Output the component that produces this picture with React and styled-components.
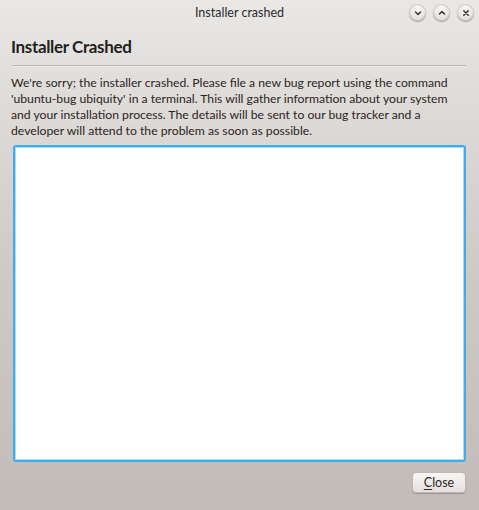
import styled, { createGlobalStyle } from "styled-components";

const GlobalStyle = createGlobalStyle`
  html, body {
    margin: 0;
    padding: 0;
  }
  body {
    font-family: Lato, "Open Sans", "DejaVu Sans", sans-serif;
  }
`;

const Window = styled.div`
  width: 479px;
  height: 510px;
  display: flex;
  flex-direction: column;
  box-sizing: border-box;
  background: linear-gradient(to bottom, #e9e8e6 0%, #dedbd9 20%, #cfc9c6 55%, #c3bbb7 100%);
  overflow: hidden;
`;

const TitleBar = styled.div`
  height: 24px;
  position: relative;
  display: flex;
  align-items: center;
  justify-content: center;
  font-size: 12.5px;
  color: #2b2b2b;
`;

const Controls = styled.div`
  position: absolute;
  right: 5px;
  top: 4px;
  display: flex;
  gap: 7px;
`;

const CtrlButton = styled.div`
  width: 17px;
  height: 17px;
  border-radius: 50%;
  background: radial-gradient(circle at 50% 35%, #fbfaf9 0%, #e6e3e1 60%, #cfcbc8 100%);
  box-shadow: 0 1px 1px rgba(0, 0, 0, 0.3), inset 0 0 0 1px rgba(0, 0, 0, 0.12);
  display: flex;
  align-items: center;
  justify-content: center;
`;

const Body = styled.div`
  flex: 1;
  display: flex;
  flex-direction: column;
  padding: 10px 13px 17px 11px;
`;

const Heading = styled.h1`
  margin: 0;
  font-size: 17px;
  letter-spacing: -0.35px;
  font-weight: 700;
  color: #231f1c;
  line-height: 26px;
`;

const Rule = styled.div`
  margin: 5px 0 8px 1px;
  height: 1px;
  background: #b9b5b2;
  border-bottom: 1px solid #eeecea;
`;

const Message = styled.p`
  margin: 0 0 5px;
  font-size: 12.2px;
  line-height: 16px;
  color: #2a2522;
  white-space: nowrap;
`;

const Report = styled.textarea`
  flex: 1;
  margin: 1px 0 0 2px;
  resize: none;
  border: 2px solid #3daee9;
  box-shadow: inset 0 0 0 1px #a9dbf6;
  border-radius: 3px;
  background: #fff;
  outline: none;
`;

const Footer = styled.div`
  display: flex;
  justify-content: flex-end;
  margin-top: 10px;
`;

const Button = styled.button`
  width: 54px;
  height: 21px;
  padding: 0;
  font-family: inherit;
  font-size: 12.5px;
  color: #2a2522;
  border: 1px solid #bdb8b4;
  border-radius: 4px;
  background: linear-gradient(to bottom, #f7f6f5, #e4e1df);
  box-shadow: 0 1px 1px rgba(0, 0, 0, 0.2);
  u {
    text-decoration-thickness: 1px;
    text-underline-offset: 2px;
  }
`;

function Icon({ kind }) {
  return (
    <svg width="10" height="10" viewBox="0 0 10 10" fill="none" stroke="#3a3a3a" strokeWidth="1.6" strokeLinecap="round" strokeLinejoin="round">
      {kind === "min" && <path d="M2.5 4 L5 6.5 L7.5 4" />}
      {kind === "max" && <path d="M2.5 6 L5 3.5 L7.5 6" />}
      {kind === "close" && <path d="M2.8 2.8 L7.2 7.2 M7.2 2.8 L2.8 7.2" />}
    </svg>
  );
}

export default function App() {
  return (
    <>
      <GlobalStyle />
      <Window>
        <TitleBar>
          Installer crashed
          <Controls>
            <CtrlButton><Icon kind="min" /></CtrlButton>
            <CtrlButton><Icon kind="max" /></CtrlButton>
            <CtrlButton><Icon kind="close" /></CtrlButton>
          </Controls>
        </TitleBar>
        <Body>
          <Heading>Installer Crashed</Heading>
          <Rule />
          <Message>
            We're sorry; the installer crashed. Please file a new bug report using the command<br />
            'ubuntu-bug ubiquity' in a terminal. This will gather information about your system<br />
            and your installation process. The details will be sent to our bug tracker and a<br />
            developer will attend to the problem as soon as possible.
          </Message>
          <Report />
          <Footer>
            <Button><u>C</u>lose</Button>
          </Footer>
        </Body>
      </Window>
    </>
  );
}
